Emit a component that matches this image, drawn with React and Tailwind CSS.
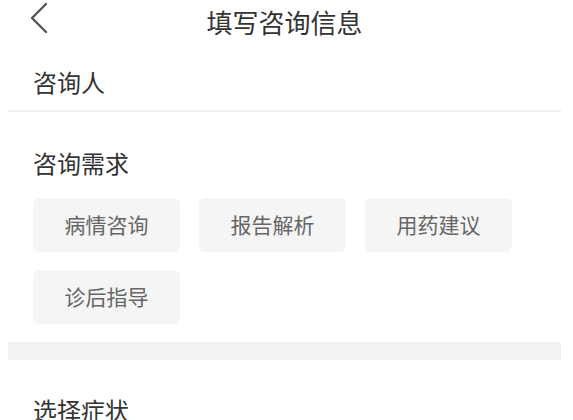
import React from 'react';

const needs = ['病情咨询', '报告解析', '用药建议', '诊后指导'];

const App = () => {
  return (
    <div
      className="min-h-screen bg-white text-[#333]"
      style={{ fontFamily: '"Noto Sans CJK SC", "Noto Sans", sans-serif' }}
    >
      <div className="ml-2 w-[553px]">
        {/* header */}
        <div className="grid h-[44px] grid-cols-[1fr_auto_1fr] items-center">
          <button className="ml-[22px] flex h-[44px] w-[30px] items-center">
            <svg width="20" height="32" viewBox="0 0 20 32" className="-mt-[8px]">
              <polyline
                points="16,2 2,16 16,30"
                fill="none"
                stroke="#555"
                strokeWidth="2.4"
                strokeLinecap="round"
                strokeLinejoin="round"
              />
            </svg>
          </button>
          <h1 className="text-[26px] leading-[44px] font-normal">填写咨询信息</h1>
          <div />
        </div>

        {/* consultant */}
        <div className="px-[25px] pt-[22px] pb-[12px]">
          <div className="text-[24px] leading-[32px]">咨询人</div>
        </div>
        <div className="h-[2px] bg-[#efefef]" />

        {/* needs */}
        <div className="px-[25px] pt-[35px] pb-[18px]">
          <div className="text-[24px] leading-[32px]">咨询需求</div>
          <div className="mt-[19px] grid w-[479px] grid-cols-3 gap-x-[19px] gap-y-[18px]">
            {needs.map((n) => (
              <div
                key={n}
                className="flex h-[54px] items-center justify-center rounded-[6px] bg-[#f5f5f5] text-[21px] text-[#666]"
              >
                {n}
              </div>
            ))}
          </div>
        </div>
        <div className="h-[18px] bg-[#f2f2f2]" />

        {/* symptoms */}
        <div className="px-[25px] pt-[34px]">
          <div className="text-[24px] leading-[32px]">选择症状</div>
        </div>
      </div>
    </div>
  );
};

export default App;
